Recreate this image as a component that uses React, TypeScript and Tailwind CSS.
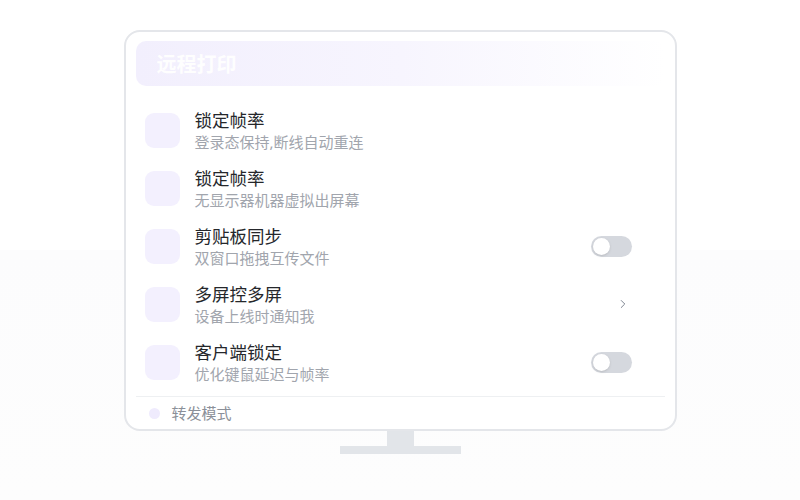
import { ChevronRight } from 'lucide-react'

type Row = {
  title: string
  desc: string
  action?: 'toggle' | 'chevron'
}

const rows: Row[] = [
  { title: '锁定帧率', desc: '登录态保持,断线自动重连' },
  { title: '锁定帧率', desc: '无显示器机器虚拟出屏幕' },
  { title: '剪贴板同步', desc: '双窗口拖拽互传文件', action: 'toggle' },
  { title: '多屏控多屏', desc: '设备上线时通知我', action: 'chevron' },
  { title: '客户端锁定', desc: '优化键鼠延迟与帧率', action: 'toggle' },
]

function Toggle() {
  return (
    <div className="flex h-[21px] w-[41px] items-center rounded-full bg-[#d5d8de] px-[2px]">
      <div className="h-[17px] w-[17px] rounded-full bg-white shadow-sm" />
    </div>
  )
}

export default function App() {
  return (
    <div
      className="flex min-h-[500px] w-full flex-col items-center bg-[linear-gradient(to_bottom,#ffffff_0,#ffffff_250px,#fcfcfd_250px,#fdfdfd_100%)] pt-[30px]"
      style={{ fontFamily: '"Noto Sans", "Noto Sans CJK SC", sans-serif' }}
    >
      {/* Screen */}
      <div className="w-[553px] rounded-[16px] border-2 border-[#e4e6ea] bg-white px-[10px] pt-[9px]">
        {/* Header */}
        <div className="flex h-[45px] items-center rounded-[10px] bg-gradient-to-r from-[#f2effd] via-[#f7f5fe] to-white/0 pl-[21px] pt-[3px]">
          <span className="text-[20px] font-semibold text-white/95">远程打印</span>
        </div>

        {/* Settings list */}
        <div className="mt-[15px] pl-[9px] pr-[33px]">
          {rows.map((row, i) => (
            <div key={i} className="flex h-[58px] items-center">
              <div className="h-[35px] w-[35px] shrink-0 rounded-[9px] bg-[#f3f0fe]" />
              <div className="ml-[15px] flex flex-1 flex-col pt-[2px]">
                <span className="text-[17.5px] leading-[22px] text-[#25272b]">{row.title}</span>
                <span className="text-[15px] leading-[22px] text-[#a1a5ad]">{row.desc}</span>
              </div>
              {row.action === 'toggle' && <Toggle />}
              {row.action === 'chevron' && (
                <ChevronRight className="mr-[2px] h-[14px] w-[14px] text-[#6b7280]" strokeWidth={1.5} />
              )}
            </div>
          ))}
        </div>

        {/* Footer */}
        <div className="mt-[5px] flex h-[33px] items-center gap-[12px] border-t border-[#eef0f2] pl-[13px]">
          <div className="h-[11px] w-[11px] rounded-full bg-[#efebfd]" />
          <span className="text-[15px] text-[#8b9099]">转发模式</span>
        </div>
      </div>

      {/* Stand */}
      <div className="h-[15px] w-[27px] bg-[#e2e5e9]" />
      <div className="h-[8px] w-[121px] bg-[#e2e5e9]" />
    </div>
  )
}
